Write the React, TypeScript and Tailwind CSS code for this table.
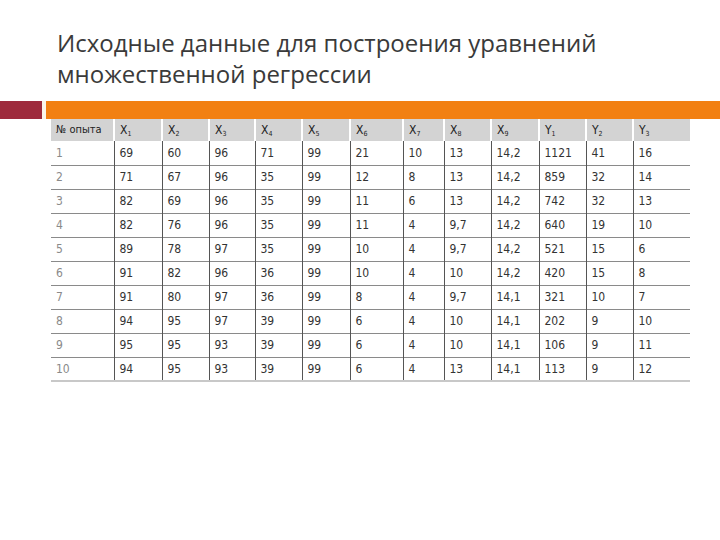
const widths = [63, 48, 47, 46, 47, 48, 53, 41, 47, 48, 47, 47, 57];

const headers = [
  { v: "X", s: "1" },
  { v: "X", s: "2" },
  { v: "X", s: "3" },
  { v: "X", s: "4" },
  { v: "X", s: "5" },
  { v: "X", s: "6" },
  { v: "X", s: "7" },
  { v: "X", s: "8" },
  { v: "X", s: "9" },
  { v: "Y", s: "1" },
  { v: "Y", s: "2" },
  { v: "Y", s: "3" },
];

const rows = [
  ["1", "69", "60", "96", "71", "99", "21", "10", "13", "14,2", "1121", "41", "16"],
  ["2", "71", "67", "96", "35", "99", "12", "8", "13", "14,2", "859", "32", "14"],
  ["3", "82", "69", "96", "35", "99", "11", "6", "13", "14,2", "742", "32", "13"],
  ["4", "82", "76", "96", "35", "99", "11", "4", "9,7", "14,2", "640", "19", "10"],
  ["5", "89", "78", "97", "35", "99", "10", "4", "9,7", "14,2", "521", "15", "6"],
  ["6", "91", "82", "96", "36", "99", "10", "4", "10", "14,2", "420", "15", "8"],
  ["7", "91", "80", "97", "36", "99", "8", "4", "9,7", "14,1", "321", "10", "7"],
  ["8", "94", "95", "97", "39", "99", "6", "4", "10", "14,1", "202", "9", "10"],
  ["9", "95", "95", "93", "39", "99", "6", "4", "10", "14,1", "106", "9", "11"],
  ["10", "94", "95", "93", "39", "99", "6", "4", "13", "14,1", "113", "9", "12"],
];

export default function App() {
  return (
    <div className="w-[720px] h-[540px] bg-white overflow-hidden">
      <div
        className="pl-[57px] pt-[27px] text-[24px] leading-[31px] text-[#3a3a3a]"
        style={{ fontFamily: '"Open Sans", "Noto Sans", sans-serif' }}
      >
        <div>Исходные данные для построения уравнений</div>
        <div>множественной регрессии</div>
      </div>

      <div className="mt-[12px] flex items-stretch h-[18px]">
        <div className="w-[42px] bg-[#9e2a3c]" />
        <div className="w-[4px] bg-[#fbf6ea]" />
        <div className="flex-1 bg-[#f28012]" />
      </div>

      <table
        className="ml-[51px] border-collapse table-fixed text-[12px] text-[#333]"
        style={{ fontFamily: '"DejaVu Sans Condensed", "Liberation Sans Narrow", "Liberation Sans", sans-serif' }}
      >
        <colgroup>
          {widths.map((w, i) => (
            <col key={i} style={{ width: w }} />
          ))}
        </colgroup>
        <thead>
          <tr className="h-[22px]">
            <th className="bg-[#d3d3d3] text-left font-normal pl-[5px] text-[11px] text-[#222] align-middle">
              № опыта
            </th>
            {headers.map((h, i) => (
              <th
                key={i}
                className="bg-[#d3d3d3] border-l-2 border-white text-left font-normal pl-[5px] text-[#222] align-middle"
              >
                <span className="text-[12px]">{h.v}</span>
                <sub className="text-[7px]">{h.s}</sub>
              </th>
            ))}
          </tr>
        </thead>
        <tbody>
          {rows.map((r, ri) => (
            <tr
              key={ri}
              className={
                ri === rows.length - 1
                  ? "h-[24px] border-b-2 border-[#c8c8c8]"
                  : "h-[24px] border-b border-[#8a8a8a]"
              }
            >
              {r.map((c, ci) => (
                <td
                  key={ci}
                  className={
                    ci === 0
                      ? "pl-[5px] text-[#8a8a8a] align-middle"
                      : "pl-[5px] border-l border-[#555] align-middle"
                  }
                >
                  {c}
                </td>
              ))}
            </tr>
          ))}
        </tbody>
      </table>
    </div>
  );
}
